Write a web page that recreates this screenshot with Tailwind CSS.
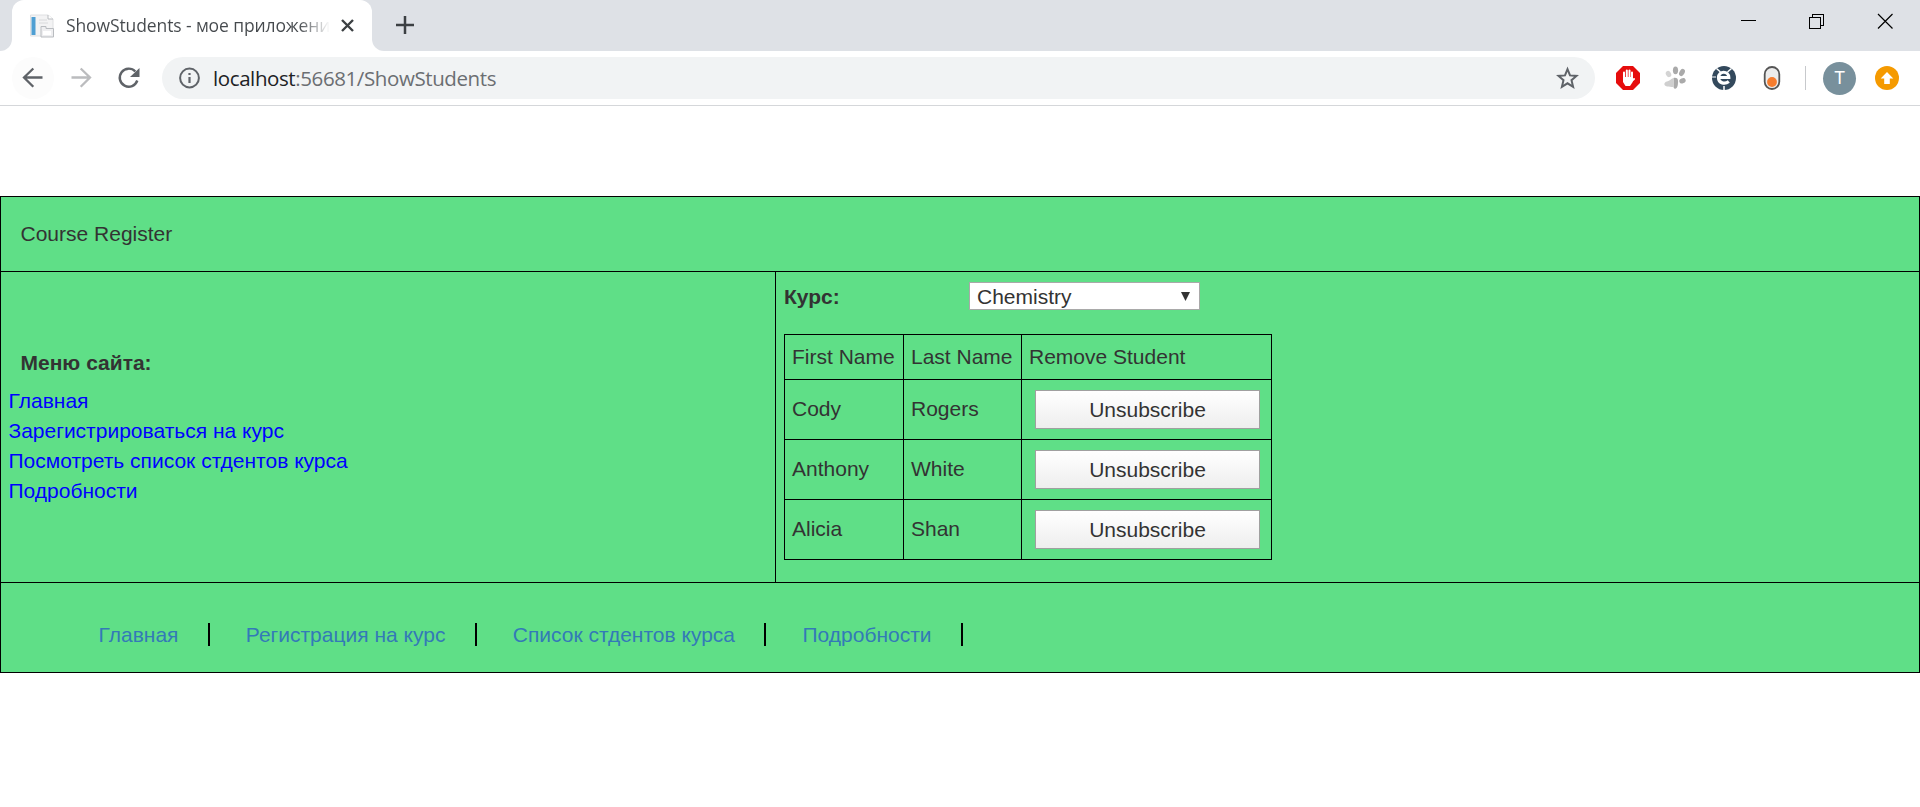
<!DOCTYPE html>
<html lang="ru">
<head>
<meta charset="utf-8">
<title>ShowStudents - мое приложение</title>
<script src="https://cdn.jsdelivr.net/npm/@tailwindcss/browser@4"></script>
</head>
<body class="h-[807px] overflow-hidden bg-white font-['Liberation_Sans',sans-serif] text-[21px] leading-[30px] text-[#333333]">
<header class="font-['Open_Sans',sans-serif]">
  <div class="flex h-[51px] bg-[#dee1e6]">
    <div class="w-3 bg-white"><div class="h-full rounded-br-xl bg-[#dee1e6]"></div></div>
    <div class="bg-[#dee1e6]"><div class="flex h-[51px] w-[360px] items-center rounded-t-xl bg-white pl-[18px]">
      <svg class="size-6 shrink-0" viewBox="0 0 24 24"><path d="M.5 1H18l5 4v17H.5z" fill="#f3f3f4" stroke="#dfe0e2"/><path d="M18 1v4h5" fill="#fff" stroke="#b9bcc0"/><path d="M1.500 3h4v18h-4z" fill="#4f9fd3"/><path d="M9 6h8M9 9h9" stroke="#d9dadc"/><path d="M11 14.500v-2h5v2h7.500v8.500H11z" fill="#eeeef0" stroke="#b9bcc0"/><path d="M13 17h8v4h-8z" fill="#fff"/></svg>
      <div class="mb-[2px] ml-3 w-[264px] overflow-hidden whitespace-nowrap bg-linear-to-r from-[#45494d] from-88% to-transparent bg-clip-text text-[17.5px] leading-6 tracking-[-0.11px] text-transparent">ShowStudents - мое приложени</div>
      <svg class="ml-[6px] size-6 shrink-0" viewBox="0 0 24 24" fill="none" stroke="#3c4043" stroke-width="2.400"><path d="M6 6l11 11M17 6L6 17"/></svg>
    </div></div>
    <div class="flex-1 bg-white"><div class="flex h-full items-start justify-between rounded-bl-xl bg-[#dee1e6]">
      <svg class="mt-[13px] ml-[21px] size-6" viewBox="0 0 24 24" stroke="#3c4043" stroke-width="2.500"><path d="M3 12h18M12 3v18"/></svg>
      <div class="mt-[13px] mr-[27px] flex gap-[52px] [&>svg]:h-4 [&>svg]:w-4">
        <svg viewBox="0 0 16 16" stroke="#000"><path d="M0 7.500h15"/></svg>
        <svg viewBox="0 0 16 16" fill="none" stroke="#000" shape-rendering="crispEdges"><path d="M.5 4.500h11v11H.5zM3.500 4V1.500h11v11H12"/></svg>
        <svg viewBox="0 0 16 16" stroke="#000" stroke-width="1.200"><path d="M1 1l14.500 14.500M15.500 1L1 15.500"/></svg>
      </div>
    </div></div>
  </div>
  <div class="flex h-[55px] items-center border-b border-[#d5d7da] pr-[21px] pl-3">
    <svg class="h-[42px] w-[42px]" viewBox="0 0 42 42" fill="none" stroke="#5f6368" stroke-width="2.300"><circle cx="21" cy="21" r="21" fill="#fcfcfc" stroke="none"/><path d="M30.500 20.500H12M21.300 11.500L12 20.500l9.300 9.300"/></svg>
    <svg class="ml-[6px] h-[42px] w-[42px]" viewBox="0 0 42 42" fill="none" stroke="#bbbcbe" stroke-width="2.300"><path d="M11.500 20.500H30M20.700 11.500l9.300 9-9.300 9.300"/></svg>
    <svg class="ml-[6px] h-[42px] w-[42px]" viewBox="0 0 42 42" fill="none" stroke="#5f6368" stroke-width="2.400"><path d="M29.300 23.500a9 9 0 1 1-2-9"/><path d="M31.500 11v9H22z" fill="#5f6368" stroke="none"/></svg>
    <div class="ml-3 flex h-[42px] w-[1433px] items-center rounded-full bg-[#f1f3f4] px-[15px]">
      <svg class="size-6" viewBox="0 0 24 24" fill="none" stroke="#5f6368" stroke-width="2"><circle cx="12.500" cy="12" r="9.400"/><path d="M12.500 11v6M12.500 7v2" stroke-width="2.200"/></svg>
      <div class="ml-3 pb-px text-[20.5px] tracking-[-0.4px] whitespace-nowrap text-[#6b6e72]"><span class="text-[#202124]">localhost</span>:56681/ShowStudents</div>
      <svg class="ml-auto size-6" viewBox="0 0 24 24" fill="none" stroke="#5f6368" stroke-width="2"><path d="M11.500 3.200l2.500 6.200 6.500.5-5 4.300 1.600 6.600-5.600-3.500-5.600 3.500 1.600-6.600-5-4.300 6.500-.5z"/></svg>
    </div>
    <svg class="ml-[21px] size-6" viewBox="0 0 24 24"><path d="M7 0h10l7 7v10l-7 7H7l-7-7V7z" fill="#e60d0d"/><g stroke="#fff" stroke-width="2" stroke-linecap="round"><path d="M8 13V6.500M10.800 12V4.500M13.500 12V4.500M16 13V6.500M14.500 16l3.500-3"/></g><path d="M7 11h10l-.3 5-2.700 4H9.500L7 16z" fill="#fff"/></svg>
    <svg class="ml-6 size-6" viewBox="0 0 24 24"><ellipse cx="4.500" cy="8" rx="2.500" ry="3.300" fill="#d4d4d4" transform="rotate(-30 4.500 8)"/><g fill="#aaa"><ellipse cx="11.500" cy="4.300" rx="2.600" ry="3.900"/><ellipse cx="18" cy="6.500" rx="2.500" ry="3.800" transform="rotate(30 18 6.500)"/><ellipse cx="18.500" cy="14.800" rx="3.300" ry="2.500" transform="rotate(-25 18.500 14.800)"/><path d="M9.500 12c5-1 5 3 4.300 7-.5 4-3.500 5-4.300 2z"/></g><path d="M9.500 12v9c-3 0-4-.5-6.500-.5-4-1-3-4.500 0-5 3-.5 4-3 6.500-3.500z" fill="#cfcfcf"/></svg>
    <svg class="ml-6 size-6" viewBox="0 0 24 24"><circle cx="12" cy="12" r="12" fill="#33495c"/><path d="M4.500 2.500l4 3.500M19.500 2.500l-4 3.500M12 20v4" stroke="#fff" stroke-width="1.500"/><path d="M0 11h4" stroke="#fff"/><path d="M6.500 11.500h10.300c0-7-10.300-7-10.300 0 0 6 6.500 7 10.300 4" fill="none" stroke="#fff" stroke-width="3.200"/></svg>
    <svg class="ml-6 size-6" viewBox="0 0 24 24"><rect x="4.700" y="1" width="14.600" height="22" rx="7.300" fill="#ececec" stroke="#555" stroke-width="1.800"/><circle cx="12" cy="16" r="4.900" fill="#f57c2e"/></svg>
    <div class="ml-[21px] h-6 w-px bg-[#c7c9cc]"></div>
    <div class="ml-[17px] flex size-[33px] items-center justify-center rounded-full bg-[#78909c] font-['Roboto',sans-serif] text-[18px] text-white">T</div>
    <svg class="ml-[19px] size-6" viewBox="0 0 24 24"><circle cx="12" cy="12" r="12" fill="#f59a00"/><path d="M12 6l6.300 6.500h-3.500V18H9.200v-5.500H5.700z" fill="#fff"/></svg>
  </div>
</header>

<main class="mt-[90px] border border-black bg-[#5fdf87]">
  <div class="h-[75px] border-b border-black pt-[22px] pl-[19.5px]">Course Register</div>
  <div class="flex h-[311px] border-b border-black">
    <nav class="flex w-[775px] flex-col border-r border-black pt-[76px] pl-[7.5px] text-[#0000ff]">
      <b class="mb-2 ml-3 text-[#333333]">Меню сайта:</b>
      <a>Главная</a><a>Зарегистрироваться на курс</a><a>Посмотреть список стдентов курса</a><a>Подробности</a>
    </nav>
    <section class="pt-[10px] pl-2">
      <div class="flex">
        <b class="w-[185px]">Курс:</b>
        <div class="flex h-7 w-[231px] items-center justify-between border border-[#a9a9a9] bg-white pr-[9px] pl-[7px]"><span class="pt-[2px]">Chemistry</span><svg class="h-[9px] w-[9px]" viewBox="0 0 9 9"><path d="M0 0h9L4.500 9z" fill="#333"/></svg></div>
      </div>
      <table class="mt-[22px] w-[488px] table-fixed border-collapse [&_td]:border [&_td]:border-black [&_td]:p-0 [&_td]:pl-[7px]">
        <colgroup><col class="w-[119px]"><col class="w-[118px]"><col></colgroup>
        <tbody class="[&_span]:mb-[2px] [&_span]:block">
        <tr class="h-[45px]"><td>First Name</td><td>Last Name</td><td>Remove Student</td></tr>
        <tr class="h-[60px]"><td><span>Cody</span></td><td><span>Rogers</span></td><td><button class="ml-[6px] block h-[39px] w-[225px] border border-[#a0a0a0] bg-linear-to-b from-white to-[#eeeeee]">Unsubscribe</button></td></tr>
        <tr class="h-[60px]"><td><span>Anthony</span></td><td><span>White</span></td><td><button class="ml-[6px] block h-[39px] w-[225px] border border-[#a0a0a0] bg-linear-to-b from-white to-[#eeeeee]">Unsubscribe</button></td></tr>
        <tr class="h-[60px]"><td><span>Alicia</span></td><td><span>Shan</span></td><td><button class="ml-[6px] block h-[39px] w-[225px] border border-[#a0a0a0] bg-linear-to-b from-white to-[#eeeeee]">Unsubscribe</button></td></tr>
        </tbody>
      </table>
    </section>
  </div>
  <footer class="flex h-[89px] items-start pt-10 pl-[97.5px] text-[#337ab7] [&>a]:mt-[-3px] [&>i]:mr-9 [&>i]:ml-[29.4px] [&>i]:h-[23px] [&>i]:w-[2px] [&>i]:bg-black">
    <a>Главная</a><i></i><a>Регистрация на курс</a><i></i><a>Список стдентов курса</a><i></i><a>Подробности</a><i></i>
  </footer>
</main>
</body>
</html>
